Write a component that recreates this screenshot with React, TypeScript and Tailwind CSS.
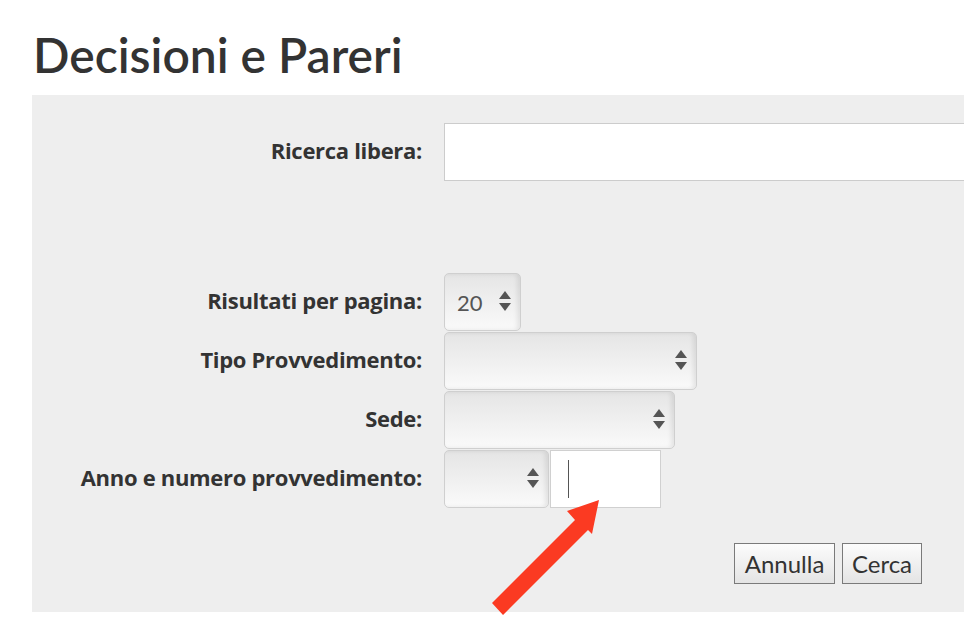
import React from "react";

function Arrows() {
  return (
    <svg width="12" height="22" viewBox="0 0 12 22" className="shrink-0">
      <polygon points="6,0 12,8 0,8" fill="#555" />
      <polygon points="0,12 12,12 6,20" fill="#555" />
    </svg>
  );
}

function FakeSelect({ width, value }: { width: string; value?: string }) {
  return (
    <div
      className={`${width} h-[58px] flex items-center justify-between pl-[12px] pr-[9px] rounded-[5px] border border-[#cfcfcf] bg-gradient-to-b from-[#e5e5e5] to-[#fafafa] shadow-[inset_-3px_0_4px_rgba(0,0,0,0.08)]`}
    >
      <span className="text-[22px] text-[#555]">{value}</span>
      <Arrows />
    </div>
  );
}

function Label({ children }: { children: React.ReactNode }) {
  return (
    <div
      className="text-right text-[22px] font-bold text-[#333] tracking-[-0.3px] pb-[4px]"
      style={{ fontFamily: "'Open Sans', sans-serif" }}
    >
      {children}
    </div>
  );
}

export default function App() {
  return (
    <div
      className="relative w-[964px] h-[628px] overflow-hidden bg-white"
      style={{ fontFamily: "Lato, 'Open Sans', sans-serif" }}
    >
      <h1 className="h-[95px] pl-[33px] pt-[31px] text-[48px] leading-none font-semibold text-[#333]">
        Decisioni e Pareri
      </h1>

      <div className="ml-[32px] h-[517px] bg-[#eeeeee] overflow-hidden pt-[28px]">
        <div className="grid grid-cols-[390px_1fr] gap-x-[22px] items-center">
          <Label>Ricerca libera:</Label>
          <div className="w-[560px] h-[58px] bg-white border border-[#cccccc]" />
        </div>

        <div className="mt-[92px] grid grid-cols-[390px_1fr] gap-x-[22px] gap-y-[1px] items-center">
          <Label>Risultati per pagina:</Label>
          <FakeSelect width="w-[77px]" value="20" />

          <Label>Tipo Provvedimento:</Label>
          <FakeSelect width="w-[253px]" />

          <Label>Sede:</Label>
          <FakeSelect width="w-[231px]" />

          <Label>Anno e numero provvedimento:</Label>
          <div className="flex gap-[1px]">
            <FakeSelect width="w-[105px]" />
            <div className="w-[111px] h-[58px] bg-white border border-[#d0d0d0] flex items-center pl-[17px]">
              <span className="w-[1px] h-[38px] bg-[#555]" />
            </div>
          </div>
        </div>

        <div className="mt-[35px] flex justify-end gap-[7px] pr-[42px]">
          <button className="h-[41px] w-[101px] border border-[#7a7a7a] bg-gradient-to-b from-[#fcfcfc] to-[#e4e4e4] text-[24px] text-[#333] leading-none">
            Annulla
          </button>
          <button className="h-[41px] w-[80px] border border-[#7a7a7a] bg-gradient-to-b from-[#fcfcfc] to-[#e4e4e4] text-[24px] text-[#333] leading-none">
            Cerca
          </button>
        </div>
      </div>

      <svg className="absolute left-[480px] top-[490px]" width="130" height="135" viewBox="480 490 130 135">
        <polygon
          points="599,500 592,534 588,530 503,615 492,603 575,520 567,511"
          fill="#fb3a22"
        />
      </svg>
    </div>
  );
}
